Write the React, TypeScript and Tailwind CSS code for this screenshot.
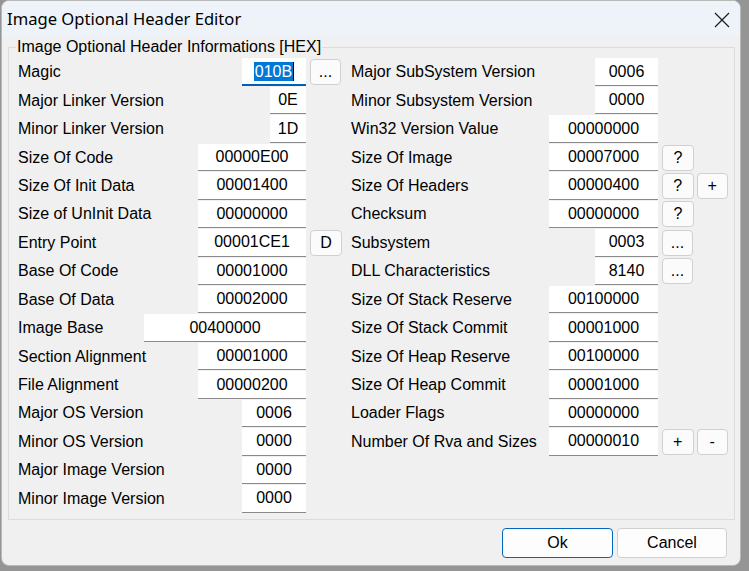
import { clsx } from "clsx";

type Field = {
  label: string;
  value: string;
  w: number;
  btns?: string[];
  active?: boolean;
};

const leftFields: Field[] = [
  { label: "Magic", value: "010B", w: 64, btns: ["..."], active: true },
  { label: "Major Linker Version", value: "0E", w: 36 },
  { label: "Minor Linker Version", value: "1D", w: 36 },
  { label: "Size Of Code", value: "00000E00", w: 108 },
  { label: "Size Of Init Data", value: "00001400", w: 108 },
  { label: "Size of UnInit Data", value: "00000000", w: 108 },
  { label: "Entry Point", value: "00001CE1", w: 108, btns: ["D"] },
  { label: "Base Of Code", value: "00001000", w: 108 },
  { label: "Base Of Data", value: "00002000", w: 108 },
  { label: "Image Base", value: "00400000", w: 162 },
  { label: "Section Alignment", value: "00001000", w: 108 },
  { label: "File Alignment", value: "00000200", w: 108 },
  { label: "Major OS Version", value: "0006", w: 64 },
  { label: "Minor OS Version", value: "0000", w: 64 },
  { label: "Major Image Version", value: "0000", w: 64 },
  { label: "Minor Image Version", value: "0000", w: 64 },
];

const rightFields: Field[] = [
  { label: "Major SubSystem Version", value: "0006", w: 63 },
  { label: "Minor Subsystem Version", value: "0000", w: 63 },
  { label: "Win32 Version Value", value: "00000000", w: 109 },
  { label: "Size Of Image", value: "00007000", w: 109, btns: ["?"] },
  { label: "Size Of Headers", value: "00000400", w: 109, btns: ["?", "+"] },
  { label: "Checksum", value: "00000000", w: 109, btns: ["?"] },
  { label: "Subsystem", value: "0003", w: 63, btns: ["..."] },
  { label: "DLL Characteristics", value: "8140", w: 63, btns: ["..."] },
  { label: "Size Of Stack Reserve", value: "00100000", w: 109 },
  { label: "Size Of Stack Commit", value: "00001000", w: 109 },
  { label: "Size Of Heap Reserve", value: "00100000", w: 109 },
  { label: "Size Of Heap Commit", value: "00001000", w: 109 },
  { label: "Loader Flags", value: "00000000", w: 109 },
  { label: "Number Of Rva and Sizes", value: "00000010", w: 109, btns: ["+", "-"] },
];

function SmallButton({ text }: { text: string }) {
  return (
    <button
      className={clsx(
        "h-[26px] rounded-[4px] border border-[#d0d0d0] bg-[#fbfbfb] text-[16px] leading-none text-black flex justify-center",
        text === "..." ? "w-[31px] items-end pb-[4px]" : "w-[32px] items-center"
      )}
    >
      {text}
    </button>
  );
}

function Row({ f, slot }: { f: Field; slot: string }) {
  return (
    <div className="flex items-center h-[28.45px]">
      <span className="flex-1 whitespace-nowrap">{f.label}</span>
      <div
        style={{ width: f.w }}
        className={clsx(
          "h-[27.5px] bg-white flex items-center justify-center",
          f.active ? "border-b-2 border-[#005fb8]" : "border-b border-[#8a8a8a]"
        )}
      >
        {f.active ? (
          <span className="flex items-center">
            <span className="bg-[#0078d7] text-white px-[1px] leading-[19px]">{f.value}</span>
            <span className="w-px h-[19px] bg-black" />
          </span>
        ) : (
          f.value
        )}
      </div>
      <div className={clsx("flex pl-[4px] gap-[3px]", slot)}>
        {f.btns?.map((b, i) => <SmallButton key={i} text={b} />)}
      </div>
    </div>
  );
}

export default function App() {
  return (
    <div className="w-[749px] h-[571px] bg-[#959595] overflow-hidden">
      <div
        className="ml-[1px] w-[740px] h-[566px] rounded-lg bg-[#f0f0f0] border border-[#b8b8b8] overflow-hidden flex flex-col text-black"
        style={{ fontFamily: '"Liberation Sans", Arial, sans-serif' }}
      >
        {/* Title bar */}
        <div className="h-[36px] bg-[#eef3f9] flex items-center justify-between pl-[5px] pr-[10px] pt-[1px] shrink-0">
          <span className="text-[16.6px]" style={{ fontFamily: '"Noto Sans", sans-serif' }}>
            Image Optional Header Editor
          </span>
          <svg width="16" height="16" viewBox="0 0 16 16">
            <path d="M1 1 L15 15 M15 1 L1 15" stroke="#1a1a1a" strokeWidth="1.2" />
          </svg>
        </div>

        <div className="flex-1 flex flex-col px-[6px] pt-[1px] text-[16px]">
          <fieldset className="border border-[#dcdcdc] pl-[9px] pr-[6px] pt-[2px] pb-[6px]">
            <legend className="-ml-[2px] px-px leading-[18px]">Image Optional Header Informations [HEX]</legend>
            <div className="flex gap-[9px]">
              <div className="w-[324px] flex flex-col">
                {leftFields.map((f) => (
                  <Row key={f.label} f={f} slot="w-[36px]" />
                ))}
              </div>
              <div className="w-[377px] flex flex-col">
                {rightFields.map((f) => (
                  <Row key={f.label} f={f} slot="w-[70px]" />
                ))}
              </div>
            </div>
          </fieldset>

          <div className="flex justify-end gap-[4px] mt-[8px] pr-[7px]">
            <button className="w-[111px] h-[30px] rounded-[4px] border border-[#0067c0] bg-[#fdfdfd] text-[16px]">
              Ok
            </button>
            <button className="w-[110px] h-[30px] rounded-[4px] border border-[#d0d0d0] bg-[#fdfdfd] text-[16px]">
              Cancel
            </button>
          </div>
        </div>
      </div>
    </div>
  );
}
